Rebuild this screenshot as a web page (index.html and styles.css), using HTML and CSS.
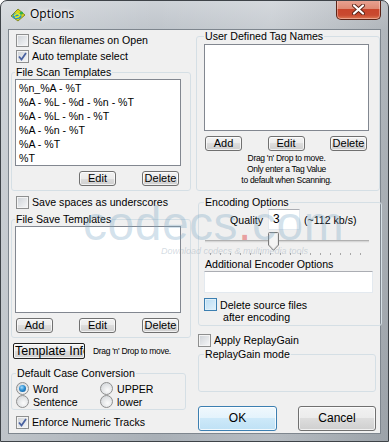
FILE: index.html
```html
<!DOCTYPE html>
<html lang="en">
<head>
  <meta charset="UTF-8">
  <meta name="viewport" content="width=device-width, initial-scale=1.0">
  <title>Options</title>
  <link rel="stylesheet" href="styles.css">
</head>
<body>
  <div class="window">
    <div class="titlebar">
      <svg class="app-icon" width="16" height="16" viewBox="0 0 16 16">
        <path d="M1 9 L8 2 L15 8 L8 14 Z" fill="#d9d21c" stroke="#6f7a12" stroke-width="0.8"/>
        <ellipse cx="7" cy="9" rx="4.5" ry="3" fill="#1f8fd0"/>
        <path d="M4 9 Q7 5 10 8 Q8 11 5 10" fill="none" stroke="#e8f020" stroke-width="1.4"/>
        <circle cx="11.5" cy="6" r="1.6" fill="#2bb24c"/>
      </svg>
      <span class="title">Options</span>
      <div class="close-btn">
        <svg width="13" height="11" viewBox="0 0 13 11">
          <path d="M2 1.5 L11 9.5 M11 1.5 L2 9.5" stroke="#5a2418" stroke-width="4" stroke-linecap="round"/>
          <path d="M2 1.5 L11 9.5 M11 1.5 L2 9.5" stroke="#ffffff" stroke-width="2.2" stroke-linecap="round"/>
        </svg>
      </div>
    </div>

    <div class="client">
      <div class="col col-left">
        <label class="check"><span class="box"></span>Scan filenames on Open</label>
        <label class="check"><span class="box checked"><svg width="9" height="9" viewBox="0 0 9 9"><path d="M1 4.5 L3.5 7.5 L8 1" fill="none" stroke="#4a62a0" stroke-width="1.8"/></svg></span>Auto template select</label>

        <fieldset class="group left-group">
          <legend>File Scan Templates</legend>
          <div class="listbox">
            <div class="item">%n_%A - %T</div>
            <div class="item">%A - %L - %d - %n - %T</div>
            <div class="item">%A - %L - %n - %T</div>
            <div class="item">%A - %n - %T</div>
            <div class="item">%A - %T</div>
            <div class="item">%T</div>
          </div>
          <div class="btn-row">
            <button class="btn hidden">Add</button>
            <button class="btn">Edit</button>
            <button class="btn">Delete</button>
          </div>
        </fieldset>

        <label class="check check-gap"><span class="box"></span>Save spaces as underscores</label>

        <fieldset class="group left-group save-group">
          <legend>File Save Templates</legend>
          <div class="listbox"></div>
          <div class="btn-row">
            <button class="btn">Add</button>
            <button class="btn">Edit</button>
            <button class="btn">Delete</button>
          </div>
        </fieldset>

        <div class="info-row">
          <button class="btn info-btn">Template Info</button>
          <span class="note">Drag 'n' Drop to move.</span>
        </div>

        <fieldset class="group case-group">
          <legend>Default Case Conversion</legend>
          <div class="radio-grid">
            <label class="radio"><span class="dot selected"></span>Word</label>
            <label class="radio"><span class="dot"></span>UPPER</label>
            <label class="radio"><span class="dot"></span>Sentence</label>
            <label class="radio"><span class="dot"></span>lower</label>
          </div>
        </fieldset>

        <label class="check enforce"><span class="box checked"><svg width="9" height="9" viewBox="0 0 9 9"><path d="M1 4.5 L3.5 7.5 L8 1" fill="none" stroke="#4a62a0" stroke-width="1.8"/></svg></span>Enforce Numeric Tracks</label>
      </div>

      <div class="col col-right">
        <fieldset class="group tag-group">
          <legend>User Defined Tag Names</legend>
          <div class="listbox"></div>
          <div class="btn-row">
            <button class="btn">Add</button>
            <button class="btn">Edit</button>
            <button class="btn">Delete</button>
          </div>
          <div class="notes">
            <div>Drag 'n' Drop to move.</div>
            <div>Only enter a Tag Value</div>
            <div>to default when Scanning.</div>
          </div>
        </fieldset>

        <fieldset class="group enc-group">
          <legend>Encoding Options</legend>
          <div class="quality-row">
            <span>Quality</span>
            <div class="edit quality-edit">3</div>
            <span>(~112 kb/s)</span>
          </div>
          <div class="slider">
            <div class="track"></div>
            <svg class="thumb" width="11" height="19" viewBox="0 0 11 19">
              <path d="M1.5 0.5 H9.5 Q10.5 0.5 10.5 1.5 V13 L5.5 18.3 L0.5 13 V1.5 Q0.5 0.5 1.5 0.5 Z" fill="#e6e6e6" stroke="#7a7a7a"/>
              <path d="M2 2 H9 V12.5 L5.5 16.3 L2 12.5 Z" fill="#f4f4f4"/>
            </svg>
            <div class="ticks"></div>
          </div>
          <div class="enc-label">Additional Encoder Options</div>
          <div class="edit opts-edit"></div>
          <div class="check multi">
            <span class="box hot"></span>
            <div class="multi-text">
              <div>Delete source files</div>
              <div class="indent">after encoding</div>
            </div>
          </div>
        </fieldset>

        <label class="check replay"><span class="box"></span>Apply ReplayGain</label>

        <fieldset class="group rg-group">
          <legend>ReplayGain mode</legend>
        </fieldset>

        <div class="dialog-buttons">
          <button class="btn big default">OK</button>
          <button class="btn big">Cancel</button>
        </div>
      </div>

      <div class="watermark">
        <div class="wm-logo">codecs<span class="wm-dot">.</span>com</div>
        <div class="wm-sub">Download codecs &amp; multimedia tools</div>
      </div>
    </div>
  </div>
</body>
</html>
```

FILE: styles.css
```css
body {
  margin: 0;
  font-family: "Liberation Sans", Arial, sans-serif;
  font-size: 10.6px;
  color: #000;
  background: #fff;
}
.window {
  width: 389px;
  height: 442px;
  box-sizing: border-box;
  border: 1px solid #3e4348;
  border-radius: 7px 7px 0 0;
  padding: 0 7px 7px 7px;
  display: flex;
  flex-direction: column;
  background: linear-gradient(to right, rgba(255,255,255,0.25), rgba(255,255,255,0) 40%, rgba(255,255,255,0.15) 70%, rgba(0,0,0,0.08)),
              linear-gradient(to bottom, #cdd2d7 0, #bfc5cb 28px, #a9b0b7 100%);
  overflow: hidden;
}
.titlebar {
  height: 28px;
  display: flex;
  align-items: flex-start;
  flex-shrink: 0;
}
.app-icon {
  margin: 6px 0 0 2px;
}
.title {
  font-family: "Open Sans", "Noto Sans", sans-serif;
  font-size: 12px;
  line-height: 16px;
  margin: 5px 0 0 4px;
  text-shadow: 0 0 6px #fff, 0 0 3px #fff;
}
.close-btn {
  margin-left: auto;
  margin-top: -1px;
  width: 45px;
  height: 20px;
  box-sizing: border-box;
  border: 1px solid #5c2417;
  border-top: none;
  border-radius: 0 0 5px 5px;
  background: linear-gradient(to bottom, #e9a494 0, #df8a74 45%, #c9452b 50%, #c94a30 80%, #dd7a55 100%);
  box-shadow: inset 0 0 0 1px rgba(255,220,210,0.45);
  display: flex;
  align-items: center;
  justify-content: center;
}

.client {
  position: relative;
  flex: 1;
  display: flex;
  border: 1px solid #7e868e;
  background: #f0f0f0;
}
.col-left {
  width: 183px;
  padding: 2px 0 0 2px;
  box-sizing: border-box;
}
.col-right {
  width: 184px;
  margin-left: 4px;
}

/* checkboxes and radios */
.check {
  display: flex;
  align-items: center;
  height: 16px;
  padding-left: 5px;
}
.box {
  width: 13px;
  height: 13px;
  box-sizing: border-box;
  border: 1px solid #8e8f8f;
  background: linear-gradient(135deg, #cdd1d6, #f7f8f9);
  box-shadow: inset 0 0 0 1px #f4f4f4;
  margin-right: 3px;
  display: flex;
  align-items: center;
  justify-content: center;
  flex-shrink: 0;
}
.box.hot {
  border-color: #3c7fb1;
  background: linear-gradient(135deg, #b9dcf3, #e3f2fb);
  box-shadow: inset 0 0 0 1px #def0fa;
}
.check-gap {
  margin-top: 3px;
}
.radio-grid {
  display: grid;
  grid-template-columns: 84px auto;
  padding-top: 2px;
}
.radio {
  display: flex;
  align-items: center;
  height: 13px;
}
.dot {
  width: 13px;
  height: 13px;
  box-sizing: border-box;
  border-radius: 50%;
  border: 1px solid #8e8f8f;
  background: radial-gradient(circle at 60% 65%, #fbfbfb 0, #d6d9dc 80%);
  margin-right: 4px;
  display: flex;
  align-items: center;
  justify-content: center;
}
.dot.selected::after {
  content: "";
  width: 7px;
  height: 7px;
  border-radius: 50%;
  background: radial-gradient(circle at 40% 35%, #a6dcfb 0, #2d8fd3 45%, #0b4f8c 100%);
}

/* group boxes */
.group {
  margin: 0;
  border: 1px solid #d5dfe5;
  border-radius: 3px;
  box-sizing: border-box;
}
.group legend {
  padding: 0 1px;
  line-height: 13px;
}
.left-group {
  width: 180px;
  margin-top: 2px;
  padding: 0 9px 4px 3px;
}
.save-group {
  margin-top: 3px;
}
.listbox {
  height: 87px;
  box-sizing: border-box;
  border: 1px solid #828790;
  background: #fff;
  padding: 1px 0 0 3px;
}
.item {
  line-height: 14px;
  white-space: nowrap;
}
.btn-row {
  display: flex;
  justify-content: space-between;
  padding: 0 2px 0 1px;
  margin-top: 5px;
}
.btn {
  width: 37px;
  height: 15px;
  padding: 0;
  box-sizing: border-box;
  border: 1px solid #707070;
  border-radius: 3px;
  background: linear-gradient(to bottom, #f2f2f2 0, #ebebeb 50%, #dddddd 50%, #cfcfcf 100%);
  box-shadow: inset 0 0 0 1px rgba(255,255,255,0.7);
  font-family: "Liberation Sans", Arial, sans-serif;
  font-size: 11px;
  line-height: 13px;
  color: #000;
  text-align: center;
}
.hidden {
  visibility: hidden;
}

.info-row {
  display: flex;
  align-items: center;
  margin-top: 5px;
  height: 16px;
}
.info-btn {
  width: 72px;
  height: 16px;
  margin-left: 2px;
  border-color: #202020;
  border-radius: 2px;
  font-size: 12.5px;
  line-height: 14px;
  text-align: left;
  padding-left: 1px;
  overflow: hidden;
  white-space: nowrap;
}
.note {
  margin-left: 8px;
  font-size: 8.5px;
  letter-spacing: -0.3px;
}
.case-group {
  width: 175px;
  margin-top: 8px;
  padding: 0 4px 1px 4px;
}
.enforce {
  margin-top: 4px;
}

/* right column */
.tag-group {
  width: 184px;
  padding: 0 10px 4px 7px;
}
.tag-group .listbox {
  margin-top: 1px;
}
.notes {
  margin-top: 2px;
  text-align: center;
  font-size: 8.5px;
  letter-spacing: -0.3px;
  line-height: 11px;
}
.enc-group {
  width: 182px;
  margin: 5px 0 0 2px;
  padding: 0 8px 2px 5px;
}
.quality-row {
  display: flex;
  align-items: center;
  gap: 5px;
  margin: 0 0 0 26px;
}
.edit {
  box-sizing: border-box;
  border: 1px solid #e3e9ef;
  border-top-color: #abadb3;
  background: #fff;
}
.quality-edit {
  width: 32px;
  height: 21px;
  padding: 2px 0 0 4px;
  font-size: 12px;
  margin-right: -1px;
}
.slider {
  position: relative;
  height: 27px;
  margin-top: 1px;
}
.track {
  position: absolute;
  left: 1px;
  right: 4px;
  top: 9px;
  height: 1px;
  border-top: 1px solid #b0b0b0;
  border-bottom: 1px solid #e9e9e9;
  background: #d6d6d6;
}
.thumb {
  position: absolute;
  left: 64px;
  top: 1px;
}
.ticks {
  position: absolute;
  left: 6px;
  right: 8px;
  top: 22px;
  height: 2px;
  background: repeating-linear-gradient(to right, #a8a8a8 0 1px, transparent 1px 10px);
}
.enc-label {
  line-height: 13px;
  margin-left: 1px;
}
.opts-edit {
  width: 169px;
  height: 22px;
  margin-top: 0;
}
.multi {
  height: auto;
  align-items: flex-start;
  padding-left: 0;
  margin-top: 5px;
}
.multi-text {
  line-height: 12px;
  margin-top: 1px;
}
.indent {
  padding-left: 3px;
}
.replay {
  margin-top: 6px;
  padding-left: 2px;
}
.rg-group {
  width: 178px;
  height: 44px;
  margin: 0 0 0 2px;
  padding: 0 5px;
}
.dialog-buttons {
  display: flex;
  gap: 21px;
  margin: 14px 0 0 2px;
}
.btn.big {
  width: 78px;
  height: 25px;
  font-size: 12px;
}
.btn.default {
  width: 79px;
  border-color: #3c7fb1;
  background: linear-gradient(to bottom, #f0f8fd 0, #e3f3fc 50%, #cde9f9 50%, #bfe1f5 100%);
  box-shadow: inset 0 0 0 1px rgba(255,255,255,0.8);
}

/* watermark laid over the dialog */
.watermark {
  position: absolute;
  left: 74px;
  top: 168px;
  pointer-events: none;
}
.wm-logo {
  font-size: 48px;
  line-height: 52px;
  color: rgba(120, 165, 195, 0.32);
  letter-spacing: 0.5px;
}
.wm-dot {
  color: rgba(225, 90, 90, 0.55);
}
.wm-sub {
  margin: -4px 0 0 78px;
  font-size: 9px;
  font-style: italic;
  color: rgba(130, 150, 170, 0.35);
}
```
